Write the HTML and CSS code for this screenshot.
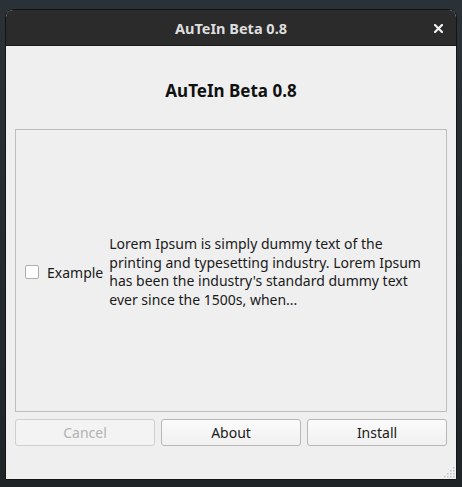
FILE: index.html
```html
<!DOCTYPE html>
<html>
<head>
<meta charset="utf-8">
<link rel="stylesheet" href="styles.css">
</head>
<body>
<div class="window">
  <div class="titlebar">
    <span class="title">AuTeIn Beta 0.8</span>
    <svg class="close" width="9" height="9" viewBox="0 0 9 9"><path d="M1 1 L8 8 M8 1 L1 8" stroke="#f0f0f0" stroke-width="2.2" stroke-linecap="square"/></svg>
  </div>
  <div class="content">
    <div class="heading">AuTeIn Beta 0.8</div>
    <div class="group">
      <label class="check"><span class="box"></span><span>Example</span></label>
      <p class="desc">Lorem Ipsum is simply dummy text of the printing and typesetting industry. Lorem Ipsum has been the industry's standard dummy text ever since the 1500s, when...</p>
    </div>
    <div class="buttons">
      <button class="btn disabled">Cancel</button>
      <button class="btn">About</button>
      <button class="btn">Install</button>
    </div>
    <svg class="grip" width="12" height="12" viewBox="0 0 12 12">
      <g fill="#c4c4c4">
        <rect x="10" y="1" width="1.5" height="1.5"/>
        <rect x="7" y="4" width="1.5" height="1.5"/><rect x="10" y="4" width="1.5" height="1.5"/>
        <rect x="4" y="7" width="1.5" height="1.5"/><rect x="7" y="7" width="1.5" height="1.5"/><rect x="10" y="7" width="1.5" height="1.5"/>
        <rect x="1" y="10" width="1.5" height="1.5"/><rect x="4" y="10" width="1.5" height="1.5"/><rect x="7" y="10" width="1.5" height="1.5"/><rect x="10" y="10" width="1.5" height="1.5"/>
      </g>
    </svg>
  </div>
</div>
</body>
</html>
```
FILE: styles.css
```css
html, body {
  margin: 0;
  padding: 0;
}
body {
  width: 462px;
  height: 487px;
  overflow: hidden;
  background: linear-gradient(180deg, #2a3237 0%, #232a2e 60%, #1f2427 100%);
  font-family: "Noto Sans", "DejaVu Sans", sans-serif;
}
.window {
  margin: 9px 0 0 5px;
  width: 450px;
  border: 1px solid #141414;
  border-radius: 8px 8px 0 0;
  overflow: hidden;
  background: #efefef;
}
.titlebar {
  height: 36px;
  background: #2b2b2b;
  display: flex;
  align-items: center;
  justify-content: center;
  position: relative;
  border-bottom: 1px solid #1c1c1c;
  box-sizing: border-box;
}
.title {
  color: #dedede;
  font-weight: bold;
  font-size: 14.5px;
}
.close {
  position: absolute;
  right: 13px;
  top: 14px;
}
.content {
  height: 433px;
  padding: 0 9px;
  box-sizing: border-box;
  position: relative;
  display: flex;
  flex-direction: column;
}
.heading {
  height: 83px;
  display: flex;
  align-items: center;
  justify-content: center;
  font-weight: bold;
  font-size: 17px;
  color: #111;
  padding-top: 5px;
  box-sizing: border-box;
}
.group {
  height: 283px;
  border: 1px solid #bdbdbd;
  box-sizing: border-box;
  display: flex;
  align-items: center;
  padding: 3px 0 0 9px;
  gap: 6px;
}
.check {
  display: flex;
  align-items: center;
  gap: 8px;
  font-size: 14px;
  color: #1a1a1a;
}
.box {
  width: 12px;
  height: 12px;
  background: #fff;
  border: 1px solid #acacac;
  border-radius: 2px;
}
.desc {
  margin: 0;
  width: 318px;
  font-size: 14px;
  line-height: 18.5px;
  color: #1a1a1a;
}
.buttons {
  margin-top: 7px;
  display: grid;
  grid-template-columns: 1fr 1fr 1fr;
  gap: 6px;
}
.btn {
  height: 27px;
  border: 1px solid #b7b7b7;
  border-radius: 3px;
  background: linear-gradient(180deg, #fbfbfb 0%, #f0f0f0 100%);
  font-family: "Noto Sans", "DejaVu Sans", sans-serif;
  font-size: 14px;
  color: #1a1a1a;
  padding: 0;
}
.btn.disabled {
  color: #b2b2b2;
  border-color: #cfcfcf;
  background: #f3f3f3;
}
.grip {
  position: absolute;
  right: 1px;
  bottom: 1px;
}
```
